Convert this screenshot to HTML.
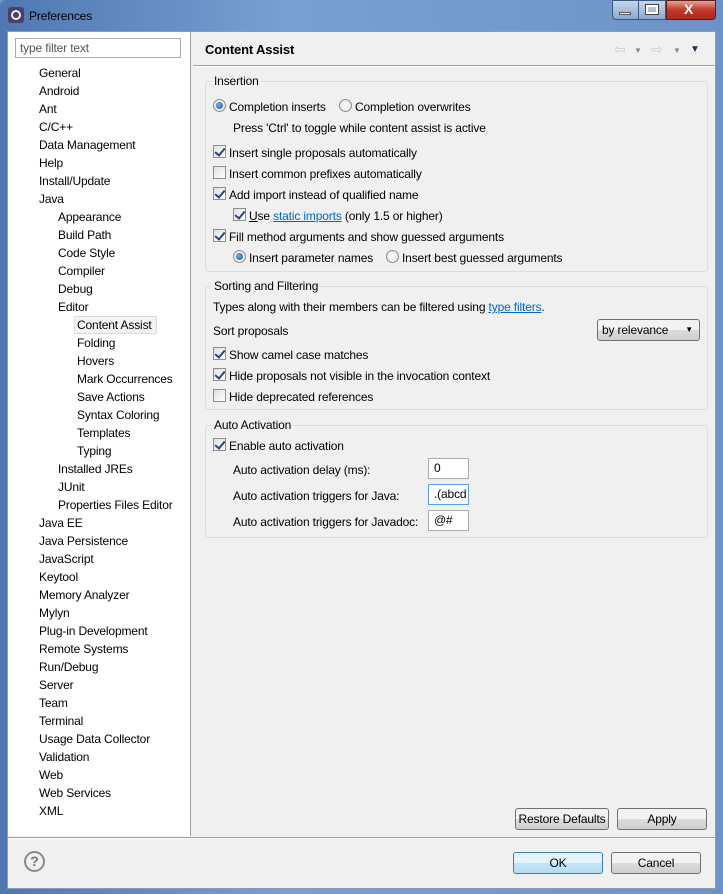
<!DOCTYPE html>
<html><head><meta charset="utf-8"><style>
*{margin:0;padding:0;box-sizing:border-box}
body{width:723px;height:894px;overflow:hidden;position:relative;font-family:"Liberation Sans",sans-serif;font-size:12px;color:#000;background:#6f95c6;letter-spacing:-0.15px}
.a{position:absolute;white-space:nowrap;line-height:14px}
#frame{position:absolute;left:0;top:0;width:723px;height:894px;background:linear-gradient(90deg,#4f78b3,#7aa0d2 40%,#6c92c8);border-radius:6px 6px 0 0}
#inner{position:absolute;left:7px;top:31px;width:709px;height:858px;background:#f0f0f0;border:1px solid #8a9cb4}
#tree{position:absolute;left:8px;top:32px;width:183px;height:804px;background:#fff;border-right:1px solid #a0a0a0}
.t{position:absolute;line-height:14px;white-space:nowrap}
.grp{position:absolute;border:1px solid #d5dfe5;border-radius:3px}
.gt{position:absolute;background:#f0f0f0;padding:0 2px;line-height:14px}
.cb{position:absolute;width:13px;height:13px;border:1px solid #8f8f8f;background:linear-gradient(135deg,#e0e0e0,#fff)}
.cb.on::after{content:"";position:absolute;left:3px;top:0px;width:4px;height:8px;border:solid #2a3f8f;border-width:0 2px 2px 0;transform:rotate(40deg)}
.rb{position:absolute;width:13px;height:13px;border:1px solid #8f8f8f;border-radius:50%;background:radial-gradient(#fff,#ddd)}
.rb.on::after{content:"";position:absolute;left:2px;top:2px;width:7px;height:7px;border-radius:50%;background:radial-gradient(circle at 40% 40%,#6fb0e8,#1b4f8f)}
.lnk{color:#0066cc;text-decoration:underline}
.btn{position:absolute;height:22px;border:1px solid #707070;border-radius:3px;background:linear-gradient(#f2f2f2 50%,#dcdcdc 50%,#cfcfcf);text-align:center;line-height:20px}
.tx{position:absolute;width:41px;height:21px;background:#fff;border:1px solid #abadb3;padding-left:5px;line-height:19px}
</style></head><body>
<div id="frame"></div>
<div class="a" style="left:8px;top:7px;width:16px;height:16px;background:#4a3f6b;border-radius:3px"></div>
<div class="a" style="left:11px;top:10px;width:10px;height:10px;border:2px solid #e8e8e8;border-radius:50%"></div>
<div class="a" style="left:29px;top:9px;color:#000">Preferences</div>
<div class="a" style="left:612px;top:0;width:27px;height:20px;border:1px solid #3b5a82;border-radius:0 0 0 4px;background:linear-gradient(#c8d6ea,#8ba7cf)"></div>
<div class="a" style="left:619px;top:12px;width:12px;height:3px;background:#fff;border:1px solid #555"></div>
<div class="a" style="left:638px;top:0;width:28px;height:20px;border:1px solid #3b5a82;background:linear-gradient(#c8d6ea,#8ba7cf)"></div>
<div class="a" style="left:646px;top:5px;width:12px;height:9px;border:2px solid #fff;outline:1px solid #444"></div>
<div class="a" style="left:666px;top:0;width:50px;height:20px;border:1px solid #5a2020;border-radius:0 0 4px 0;background:linear-gradient(#e8a090,#c0392b 50%,#b02818)"></div>
<div class="a" style="left:684px;top:2px;color:#fff;font-weight:bold;font-size:14px">X</div>
<div id="inner"></div>
<div id="tree"></div>
<div class="a" style="left:15px;top:38px;width:166px;height:20px;border:1px solid #abadb3;background:#fff;padding-left:4px;line-height:18px;color:#555">type filter text</div>
<div style="position:absolute;left:0;top:66px">
<div class="t" style="left:39px;top:0">General</div>
<div class="t" style="left:39px;top:18px">Android</div>
<div class="t" style="left:39px;top:36px">Ant</div>
<div class="t" style="left:39px;top:54px">C/C++</div>
<div class="t" style="left:39px;top:72px">Data Management</div>
<div class="t" style="left:39px;top:90px">Help</div>
<div class="t" style="left:39px;top:108px">Install/Update</div>
<div class="t" style="left:39px;top:126px">Java</div>
<div class="t" style="left:58px;top:144px">Appearance</div>
<div class="t" style="left:58px;top:162px">Build Path</div>
<div class="t" style="left:58px;top:180px">Code Style</div>
<div class="t" style="left:58px;top:198px">Compiler</div>
<div class="t" style="left:58px;top:216px">Debug</div>
<div class="t" style="left:58px;top:234px">Editor</div>
<div class="t" style="left:74px;top:250px;width:83px;height:18px;border:1px solid #d9d9d9;border-radius:2px;background:#f3f3f3"></div>
<div class="t" style="left:77px;top:252px">Content Assist</div>
<div class="t" style="left:77px;top:270px">Folding</div>
<div class="t" style="left:77px;top:288px">Hovers</div>
<div class="t" style="left:77px;top:306px">Mark Occurrences</div>
<div class="t" style="left:77px;top:324px">Save Actions</div>
<div class="t" style="left:77px;top:342px">Syntax Coloring</div>
<div class="t" style="left:77px;top:360px">Templates</div>
<div class="t" style="left:77px;top:378px">Typing</div>
<div class="t" style="left:58px;top:396px">Installed JREs</div>
<div class="t" style="left:58px;top:414px">JUnit</div>
<div class="t" style="left:58px;top:432px">Properties Files Editor</div>
<div class="t" style="left:39px;top:450px">Java EE</div>
<div class="t" style="left:39px;top:468px">Java Persistence</div>
<div class="t" style="left:39px;top:486px">JavaScript</div>
<div class="t" style="left:39px;top:504px">Keytool</div>
<div class="t" style="left:39px;top:522px">Memory Analyzer</div>
<div class="t" style="left:39px;top:540px">Mylyn</div>
<div class="t" style="left:39px;top:558px">Plug-in Development</div>
<div class="t" style="left:39px;top:576px">Remote Systems</div>
<div class="t" style="left:39px;top:594px">Run/Debug</div>
<div class="t" style="left:39px;top:612px">Server</div>
<div class="t" style="left:39px;top:630px">Team</div>
<div class="t" style="left:39px;top:648px">Terminal</div>
<div class="t" style="left:39px;top:666px">Usage Data Collector</div>
<div class="t" style="left:39px;top:684px">Validation</div>
<div class="t" style="left:39px;top:702px">Web</div>
<div class="t" style="left:39px;top:720px">Web Services</div>
<div class="t" style="left:39px;top:738px">XML</div>
</div>
<!-- header -->
<div class="a" style="left:205px;top:43px;font-weight:bold;font-size:13px">Content Assist</div>
<div class="a" style="left:614px;top:42px;color:#ccc;font-size:14px">⇦</div>
<div class="a" style="left:634px;top:44px;color:#888;font-size:8px">▼</div>
<div class="a" style="left:651px;top:42px;color:#ccc;font-size:14px">⇨</div>
<div class="a" style="left:673px;top:44px;color:#888;font-size:8px">▼</div>
<div class="a" style="left:690px;top:43px;color:#2a2a55;font-size:10px">▼</div>
<div class="a" style="left:193px;top:65px;width:522px;height:1px;background:#a0a0a0"></div>
<div class="a" style="left:193px;top:66px;width:522px;height:1px;background:#fff"></div>
<!-- Insertion -->
<div class="grp" style="left:205px;top:81px;width:503px;height:191px"></div>
<div class="gt" style="left:212px;top:74px">Insertion</div>
<div class="rb on" style="left:213px;top:99px"></div><div class="a" style="left:229px;top:100px">Completion inserts</div>
<div class="rb" style="left:339px;top:99px"></div><div class="a" style="left:355px;top:100px">Completion overwrites</div>
<div class="a" style="left:233px;top:121px">Press 'Ctrl' to toggle while content assist is active</div>
<div class="cb on" style="left:213px;top:145px"></div><div class="a" style="left:229px;top:146px">Insert single proposals automatically</div>
<div class="cb" style="left:213px;top:166px"></div><div class="a" style="left:229px;top:167px">Insert common prefixes automatically</div>
<div class="cb on" style="left:213px;top:187px"></div><div class="a" style="left:229px;top:188px">Add import instead of qualified name</div>
<div class="cb on" style="left:233px;top:208px"></div><div class="a" style="left:249px;top:209px"><u>U</u>se <span class="lnk">static imports</span> (only 1.5 or higher)</div>
<div class="cb on" style="left:213px;top:229px"></div><div class="a" style="left:229px;top:230px">Fill method arguments and show guessed arguments</div>
<div class="rb on" style="left:233px;top:250px"></div><div class="a" style="left:249px;top:251px">Insert parameter names</div>
<div class="rb" style="left:386px;top:250px"></div><div class="a" style="left:402px;top:251px">Insert best guessed arguments</div>
<!-- Sorting -->
<div class="grp" style="left:205px;top:286px;width:503px;height:124px"></div>
<div class="gt" style="left:212px;top:279px">Sorting and Filtering</div>
<div class="a" style="left:213px;top:300px">Types along with their members can be filtered using <span class="lnk">type filters</span>.</div>
<div class="a" style="left:213px;top:324px">Sort proposals</div>
<div class="a" style="left:597px;top:319px;width:103px;height:22px;border:1px solid #707070;border-radius:3px;background:linear-gradient(#f2f2f2 50%,#dcdcdc 50%,#cfcfcf);padding-left:4px;line-height:20px">by relevance<span style="position:absolute;right:6px;top:0;font-size:8px">▼</span></div>
<div class="cb on" style="left:213px;top:347px"></div><div class="a" style="left:229px;top:348px">Show camel case matches</div>
<div class="cb on" style="left:213px;top:368px"></div><div class="a" style="left:229px;top:369px">Hide proposals not visible in the invocation context</div>
<div class="cb" style="left:213px;top:389px"></div><div class="a" style="left:229px;top:390px">Hide deprecated references</div>
<!-- Auto -->
<div class="grp" style="left:205px;top:425px;width:503px;height:113px"></div>
<div class="gt" style="left:212px;top:418px">Auto Activation</div>
<div class="cb on" style="left:213px;top:438px"></div><div class="a" style="left:229px;top:439px">Enable auto activation</div>
<div class="a" style="left:233px;top:463px">Auto activation delay (ms):</div><div class="tx" style="left:428px;top:458px">0</div>
<div class="a" style="left:233px;top:489px">Auto activation triggers for Java:</div><div class="tx" style="left:428px;top:484px;border-color:#569de5">.(abcd</div>
<div class="a" style="left:233px;top:515px">Auto activation triggers for Javadoc:</div><div class="tx" style="left:428px;top:510px">@#</div>
<!-- buttons -->
<div class="btn" style="left:515px;top:808px;width:94px">Restore Defaults</div>
<div class="btn" style="left:617px;top:808px;width:90px">Apply</div>
<div class="a" style="left:8px;top:837px;width:707px;height:1px;background:#a0a0a0"></div>
<div class="a" style="left:8px;top:838px;width:707px;height:1px;background:#fff"></div>
<div class="a" style="left:24px;top:851px;width:21px;height:21px;border:2px solid #8a8a8a;border-radius:50%;text-align:center;line-height:17px;font-weight:bold;font-size:14px;color:#777">?</div>
<div class="btn" style="left:513px;top:852px;width:90px;border-color:#3c7fb1;background:linear-gradient(#e5f4fc 50%,#c4e5f6 50%,#b6dcf1)">OK</div>
<div class="btn" style="left:611px;top:852px;width:90px">Cancel</div>
</body></html>
